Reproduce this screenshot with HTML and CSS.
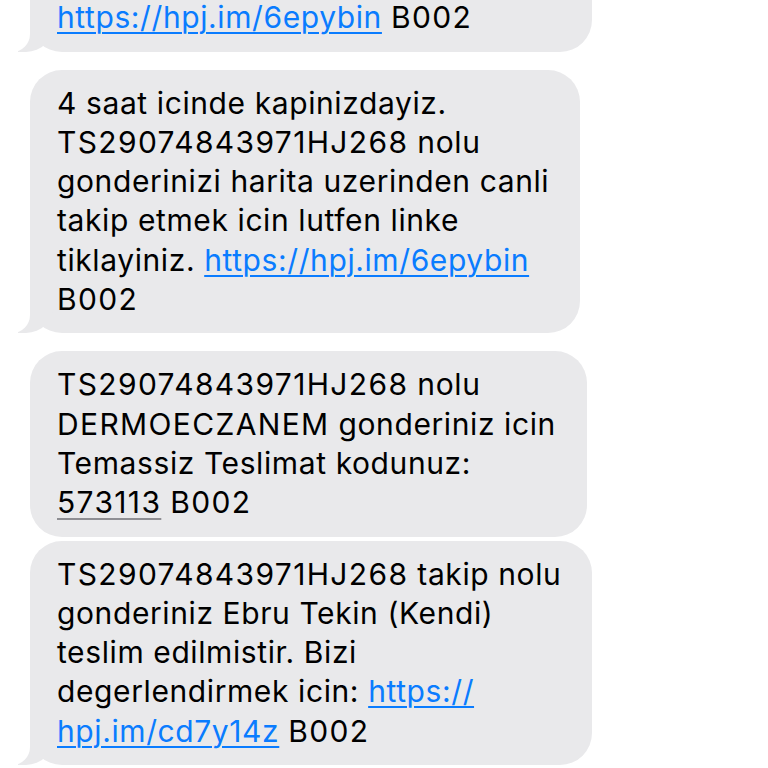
FILE: index.html
```html
<!DOCTYPE html>
<html lang="tr">
<head>
<meta charset="utf-8">
<title>Mesajlar</title>
<link rel="stylesheet" href="styles.css">
</head>
<body>
<div class="chat">
  <div class="msg tail"><span class="wide">TS29074843971HJ268</span> takip nolu<br>gonderiniz yola cikmistir.<br><a class="link" href="#">https://hpj.im/6epybin</a> <span class="wide">B002</span></div>
  <div class="msg tail gap-lg">4 saat icinde kapinizdayiz.<br><span class="wide">TS29074843971HJ268</span> nolu<br>gonderinizi harita uzerinden canli<br>takip etmek icin lutfen linke<br>tiklayiniz. <a class="link" href="#">https://hpj.im/6epybin</a><br><span class="wide">B002</span></div>
  <div class="msg gap-lg"><span class="wide">TS29074843971HJ268</span> nolu<br><span class="wide">DERMOECZANEM</span> gonderiniz icin<br>Temassiz Teslimat kodunuz:<br><span class="code wide">573113</span> <span class="wide">B002</span></div>
  <div class="msg tail gap-sm"><span class="wide">TS29074843971HJ268</span> takip nolu<br>gonderiniz Ebru Tekin (Kendi)<br>teslim edilmistir. Bizi<br>degerlendirmek icin: <a class="link" href="#">https://</a><br><a class="link" href="#">hpj.im/cd7y14z</a> <span class="wide">B002</span></div>
</div>
</body>
</html>
```
FILE: styles.css
```css
html, body {
  margin: 0;
  padding: 0;
  background: #ffffff;
}

.chat {
  height: 768px;
  box-sizing: border-box;
  padding: 0 0 3px 30px;
  display: flex;
  flex-direction: column;
  justify-content: flex-end;
  align-items: flex-start;
  overflow: hidden;
}

.msg {
  position: relative;
  flex: none;
  background: #e9e9eb;
  border-radius: 32px;
  padding: 14px 31px 14px 27px;
  font-family: Inter, "Noto Sans", "Liberation Sans", sans-serif;
  font-size: 30px;
  line-height: 39.3px;
  letter-spacing: 0.6px;
  color: #000000;
  white-space: nowrap;
}

.wide {
  letter-spacing: 1.35px;
}

.gap-lg {
  margin-top: 18px;
}

.gap-sm {
  margin-top: 4px;
}

.tail::before {
  content: "";
  position: absolute;
  z-index: 0;
  bottom: 0;
  left: -12px;
  width: 36px;
  height: 36px;
  background: #e9e9eb;
  border-bottom-right-radius: 28px;
}

.tail::after {
  content: "";
  position: absolute;
  z-index: 1;
  bottom: 0;
  left: -18px;
  width: 18px;
  height: 36px;
  background: #ffffff;
  border-bottom-right-radius: 18px;
}

.link {
  color: #0a7cff;
  text-decoration: underline;
  text-decoration-thickness: 2px;
  text-underline-offset: 4px;
}

.code {
  text-decoration: underline;
  text-decoration-color: #8e8e93;
  text-decoration-thickness: 2px;
  text-underline-offset: 5px;
}
```
